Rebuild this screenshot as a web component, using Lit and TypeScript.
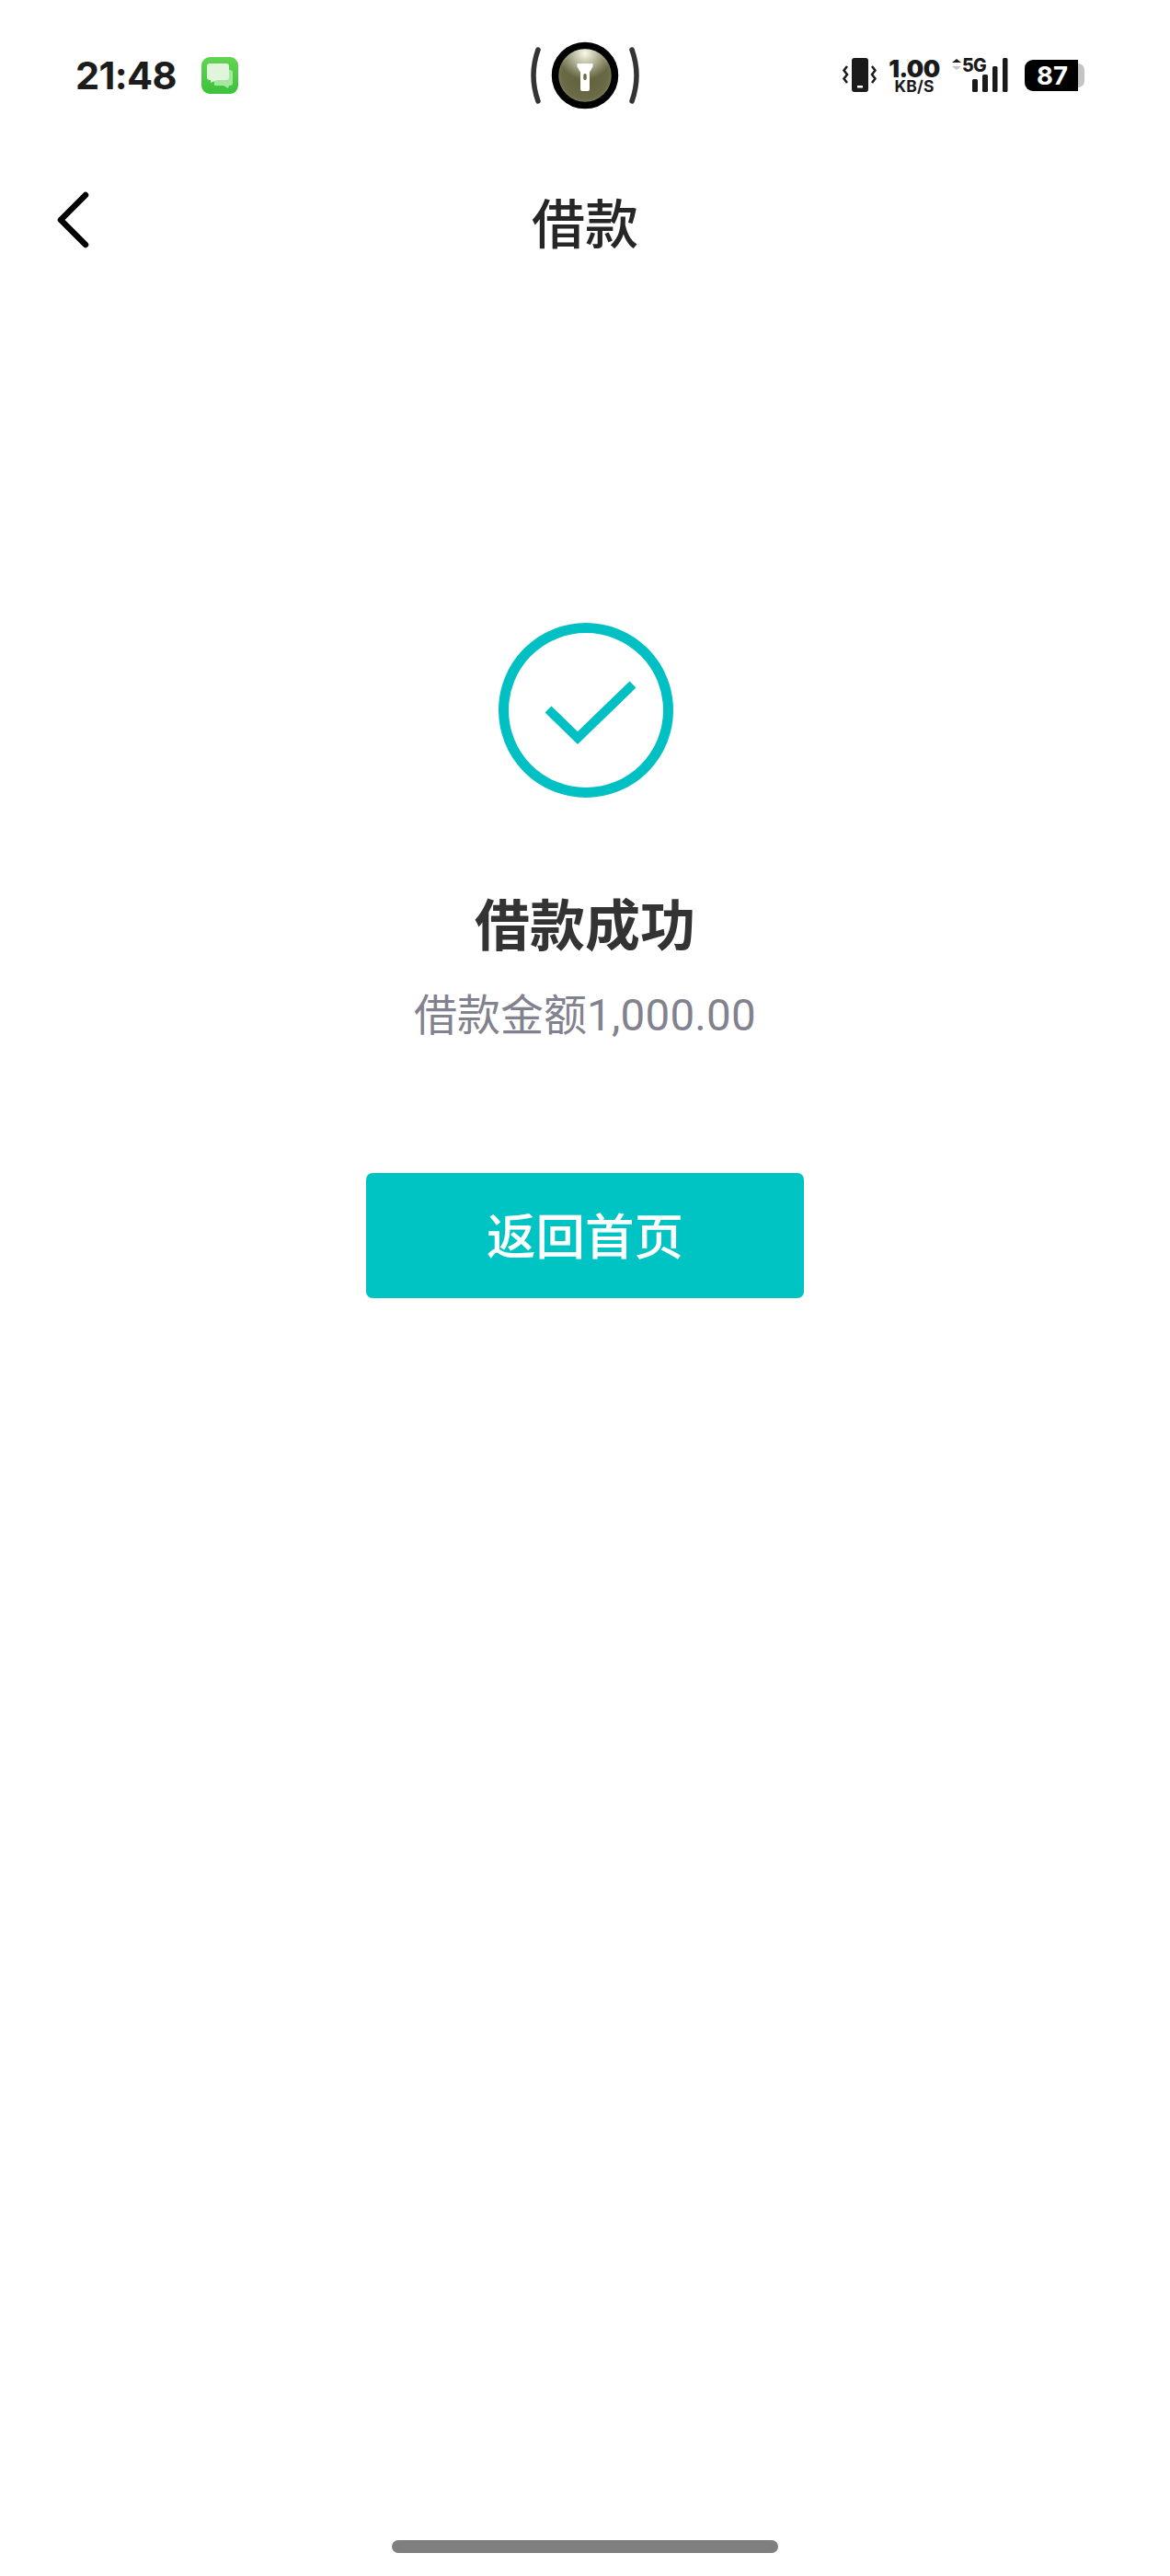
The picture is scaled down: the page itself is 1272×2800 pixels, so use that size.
import { LitElement, html, css } from "lit";
import { customElement } from "lit/decorators.js";

@customElement("app-root")
export class AppRoot extends LitElement {
  static styles = css`
    :host {
      display: flex;
      flex-direction: column;
      align-items: stretch;
      width: 1272px;
      height: 2800px;
      background: #fff;
      overflow: hidden;
      font-family: "Noto Sans CJK SC", "Noto Sans", sans-serif;
    }
    .status {
      display: grid;
      grid-template-columns: 1fr auto 1fr;
      align-items: center;
      height: 74px;
      margin-top: 45px;
      padding: 0 83px;
    }
    .left {
      display: flex;
      align-items: center;
      gap: 27px;
      margin-left: -1px;
    }
    .time {
      font-family: Inter, sans-serif;
      font-weight: 700;
      font-size: 41.5px;
      line-height: 50px;
      letter-spacing: -0.6px;
      color: #1c1c1c;
    }
    .app {
      display: block;
      width: 40px;
      height: 40px;
    }
    .torch {
      display: block;
      width: 120px;
      height: 74px;
    }
    .right {
      display: flex;
      align-items: center;
      justify-content: flex-end;
      padding-right: 10px;
      font-family: Inter, sans-serif;
      color: #1a1a1a;
    }
    .vib {
      display: block;
      width: 38px;
      height: 38px;
    }
    .speed {
      display: flex;
      flex-direction: column;
      align-items: center;
      margin-left: 14px;
      width: 54px;
      font-weight: 700;
    }
    .speed b {
      font-size: 26px;
      line-height: 24px;
      letter-spacing: -0.5px;
    }
    .speed span {
      font-size: 17.5px;
      line-height: 14px;
      letter-spacing: 0.2px;
    }
    .net {
      position: relative;
      display: block;
      width: 62px;
      height: 38px;
      margin-left: 14px;
    }
    .g5 {
      position: absolute;
      left: 11px;
      top: -3px;
      font-size: 19.5px;
      line-height: 22px;
      font-weight: 800;
      letter-spacing: -0.8px;
    }
    .net svg {
      position: absolute;
      inset: 0;
      width: 62px;
      height: 38px;
    }
    .batt {
      display: flex;
      align-items: center;
      margin-left: 17px;
    }
    .batt-body {
      width: 58px;
      height: 34px;
      box-sizing: border-box;
      background: #000;
      border-radius: 9px 0 0 9px;
      color: #fff;
      font-size: 27.5px;
      font-weight: 700;
      line-height: 34px;
      text-align: center;
      padding-left: 2px;
    }
    .batt-cap {
      width: 7px;
      height: 26px;
      background: #c4c4c4;
      border-radius: 0 8px 8px 0;
    }
    .nav {
      position: relative;
      display: flex;
      align-items: center;
      justify-content: center;
      height: 80px;
      margin-top: 81px;
    }
    .back {
      position: absolute;
      left: 50px;
      top: 0;
      width: 60px;
      height: 80px;
    }
    .nav-title {
      font-size: 58px;
      line-height: 80px;
      font-weight: 500;
      color: #262626;
    }
    .main {
      display: flex;
      flex-direction: column;
      align-items: center;
      margin-top: 397px;
    }
    .check {
      display: block;
      width: 190px;
      height: 190px;
      margin-left: 2px;
    }
    .title {
      margin-top: 100px;
      font-size: 60px;
      line-height: 70px;
      font-weight: 700;
      color: #333;
    }
    .sub {
      margin-top: 33px;
      font-size: 47px;
      line-height: 60px;
      font-weight: 400;
      color: #82828f;
      white-space: nowrap;
    }
    .sub span {
      font-family: Roboto, sans-serif;
      font-weight: 400;
      font-size: 47.5px;
      letter-spacing: 0.25px;
    }
    .btn {
      display: flex;
      align-items: center;
      justify-content: center;
      box-sizing: border-box;
      width: 476px;
      height: 136px;
      margin-top: 141px;
      padding-bottom: 6px;
      background: #00c4c4;
      border-radius: 7px;
      color: #fff;
      font-size: 53.5px;
      font-weight: 500;
    }
    .home {
      width: 420px;
      height: 14px;
      margin: auto auto 25px;
      border-radius: 7px;
      background: #7f7f7f;
    }
  `;

  render() {
    return html`
      <div class="status">
        <div class="left">
          <span class="time">21:48</span>
          <svg class="app" viewBox="0 0 40 40">
            <defs>
              <linearGradient id="g" x1="0" y1="0" x2="0" y2="1">
                <stop offset="0" stop-color="#62d454" />
                <stop offset="1" stop-color="#3cc23a" />
              </linearGradient>
            </defs>
            <rect width="40" height="40" rx="9" fill="url(#g)" />
            <path d="M14 14h17a3 3 0 0 1 3 3v11a3 3 0 0 1-3 3h-1l-1 3-5-3H14z" fill="#a6e6a0" />
            <path d="M9 7h18a3 3 0 0 1 3 3v12a3 3 0 0 1-3 3H17l-7 3v-3H9a3 3 0 0 1-3-3V10a3 3 0 0 1 3-3z" fill="#e0f5dc" />
          </svg>
        </div>
        <svg class="torch" viewBox="0 0 120 74">
          <defs>
            <radialGradient id="t" cx="0.5" cy="0.5" r="0.55">
              <stop offset="0" stop-color="#5f5f3c" />
              <stop offset="0.7" stop-color="#6a6a47" />
              <stop offset="1" stop-color="#94946e" />
            </radialGradient>
            <radialGradient id="l" cx="0.5" cy="0.08" r="0.5">
              <stop offset="0" stop-color="#fafae8" />
              <stop offset="1" stop-color="#fafae8" stop-opacity="0" />
            </radialGradient>
          </defs>
          <path d="M9 9Q-1 37 9 65" fill="none" stroke="#333" stroke-width="5.500" stroke-linecap="round" />
          <path d="M111 9Q121 37 111 65" fill="none" stroke="#333" stroke-width="5.500" stroke-linecap="round" />
          <circle cx="60" cy="37" r="32.500" fill="url(#t)" stroke="#000" stroke-width="7.500" />
          <circle cx="60" cy="37" r="28.800" fill="url(#l)" />
          <path d="M51.500 24h17v3.500l-3.500 6v18.500a2 2 0 0 1-2 2h-6a2 2 0 0 1-2-2V33.500l-3.500-6z" fill="#fff" />
          <rect x="58.300" y="35" width="3.400" height="7" rx="1.700" fill="#6a6a47" />
        </svg>
        <div class="right">
          <svg class="vib" viewBox="0 0 38 38">
            <rect x="11" y="0" width="18" height="37" rx="3" fill="#1a1a1a" />
            <rect x="17" y="30" width="6" height="2.500" fill="#fff" />
            <path d="M6 9l-3.500 4.500L6 18l-3.500 4.500L6 27M33 9l3.500 4.500L33 18l3.500 4.500L33 27" fill="none" stroke="#1a1a1a" stroke-width="2.500" />
          </svg>
          <div class="speed"><b>1.00</b><span>KB/S</span></div>
          <div class="net">
            <span class="g5">5G</span>
            <svg viewBox="0 0 62 38">
              <path d="M0 5l5-4 5 4z" fill="#1a1a1a" />
              <path d="M0 9l5 4 5-4z" fill="#c4c4c4" />
              <rect x="22" y="23" width="6" height="14" rx="1.500" fill="#1a1a1a" />
              <rect x="33" y="18" width="6" height="19" rx="1.500" fill="#1a1a1a" />
              <rect x="44" y="9" width="5.500" height="28" rx="1.500" fill="#1a1a1a" />
              <rect x="55" y="0" width="5.500" height="37" rx="1.500" fill="#1a1a1a" />
            </svg>
          </div>
          <div class="batt">
            <div class="batt-body">87</div>
            <div class="batt-cap"></div>
          </div>
        </div>
      </div>

      <div class="nav">
        <svg class="back" viewBox="0 0 60 80">
          <path d="M43 12L16 39l27 27" fill="none" stroke="#000" stroke-width="6.500" stroke-linecap="round" stroke-linejoin="round" />
        </svg>
        <span class="nav-title">借款</span>
      </div>

      <div class="main">
        <svg class="check" viewBox="0 0 190 190">
          <circle cx="95" cy="95" r="89.500" fill="none" stroke="#00c0c4" stroke-width="11" />
          <path d="M54 94l32 31 60-58" fill="none" stroke="#00c0c4" stroke-width="10" />
        </svg>
        <div class="title">借款成功</div>
        <div class="sub">借款金额<span>1,000.00</span></div>
        <div class="btn">返回首页</div>
      </div>

      <div class="home"></div>
    `;
  }
}
